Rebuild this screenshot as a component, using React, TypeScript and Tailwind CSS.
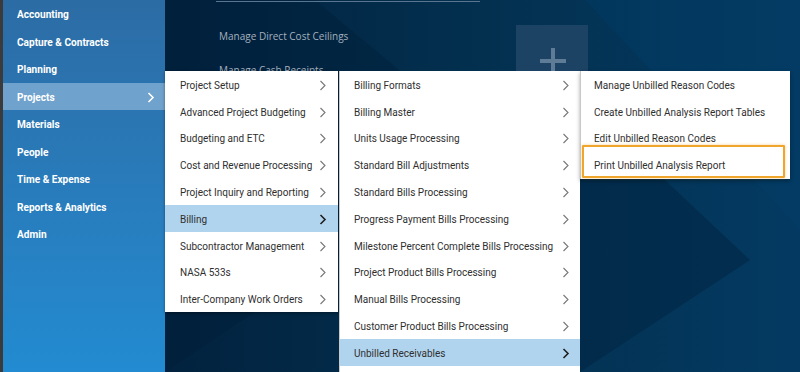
import React from 'react';

const sideItems = [
  'Accounting',
  'Capture & Contracts',
  'Planning',
  'Projects',
  'Materials',
  'People',
  'Time & Expense',
  'Reports & Analytics',
  'Admin',
];

const projectItems = [
  'Project Setup',
  'Advanced Project Budgeting',
  'Budgeting and ETC',
  'Cost and Revenue Processing',
  'Project Inquiry and Reporting',
  'Billing',
  'Subcontractor Management',
  'NASA 533s',
  'Inter-Company Work Orders',
];

const billingItems = [
  'Billing Formats',
  'Billing Master',
  'Units Usage Processing',
  'Standard Bill Adjustments',
  'Standard Bills Processing',
  'Progress Payment Bills Processing',
  'Milestone Percent Complete Bills Processing',
  'Project Product Bills Processing',
  'Manual Bills Processing',
  'Customer Product Bills Processing',
  'Unbilled Receivables',
];

const unbilledItems = [
  'Manage Unbilled Reason Codes',
  'Create Unbilled Analysis Report Tables',
  'Edit Unbilled Reason Codes',
  'Print Unbilled Analysis Report',
];

const Chevron: React.FC<{ dark?: boolean; white?: boolean }> = ({ dark, white }) => (
  <svg width="8" height="11" viewBox="0 0 8 11" className="shrink-0">
    <path
      d="M1.5 1 L6 5.5 L1.5 10"
      fill="none"
      stroke={white ? '#ffffff' : dark ? '#1f1f1f' : '#777777'}
      strokeWidth={dark || white ? 1.6 : 1.1}
    />
  </svg>
);

const MenuRow: React.FC<{ label: string; active?: boolean; chevron?: boolean; px: string }> = ({
  label,
  active,
  chevron = true,
  px,
}) => (
  <div
    className={`flex items-center justify-between h-[26.8px] pt-[2px] ${px} ${
      active ? 'bg-[#b1d4ee]' : 'bg-white'
    }`}
  >
    <span className="text-[10px] text-[#2f2f2f] whitespace-nowrap">{label}</span>
    {chevron && <Chevron dark={active} />}
  </div>
);

export default function App() {
  return (
    <div
      className="relative w-[800px] h-[372px] overflow-hidden flex bg-[#032c4e]"
      style={{ fontFamily: 'Roboto, "Noto Sans", Arial, sans-serif' }}
    >
      {/* dark left edge */}
      <div className="w-[3px] bg-[#3b3b3b]" />

      {/* Sidebar */}
      <div className="w-[162px] h-full bg-gradient-to-b from-[#2c6ca5] to-[#228bd1] flex flex-col">
        {sideItems.map(item => (
          <div
            key={item}
            className={`flex items-center justify-between h-[27.5px] pt-[2px] pl-[14px] pr-[10px] ${
              item === 'Projects' ? 'bg-[#6fa2cc]' : ''
            }`}
          >
            <span className="text-[10.1px] font-bold text-white">{item}</span>
            {item === 'Projects' && <Chevron white />}
          </div>
        ))}
      </div>

      {/* Background workspace */}
      <div className="relative flex-1 h-full bg-gradient-to-r from-[#02223f] via-[#03304f] to-[#043a62]">
        <svg className="absolute inset-0" width="635" height="372">
          <polygon points="180,0 420,0 635,230 635,0" fill="#044069" opacity="0.35" />
          <polygon points="0,0 150,0 330,150 0,372" fill="#011d36" opacity="0.35" />
          <polygon points="415,100 585,260 415,372" fill="#022644" opacity="0.6" />
        </svg>
        <div className="absolute left-[51px] top-[1px] w-[264px] h-px bg-[#5a7590]" />
        <div
          className="absolute left-[54px] top-[29px] text-[10px] text-[#a4b1bf]"
          style={{ fontFamily: '"Open Sans", sans-serif' }}
        >
          Manage Direct Cost Ceilings
        </div>
        <div
          className="absolute left-[54px] top-[63px] text-[10px] text-[#a4b1bf]"
          style={{ fontFamily: '"Open Sans", sans-serif' }}
        >
          Manage Cash Receipts
        </div>
        <div className="absolute left-[351px] top-[25px] w-[72px] h-[60px] bg-[#1c4264]">
          <div className="absolute left-[35px] top-[23px] w-[4px] h-[30px] bg-[#5f7c97]" />
          <div className="absolute left-[24px] top-[34px] w-[26px] h-[4px] bg-[#5f7c97]" />
        </div>
      </div>

      {/* Projects flyout */}
      <div className="absolute left-[165px] top-[71px] w-[173px] bg-white shadow-[0_1px_3px_rgba(0,0,0,0.4)] flex flex-col">
        {projectItems.map(item => (
          <MenuRow key={item} label={item} active={item === 'Billing'} px="pl-[15px] pr-[11px]" />
        ))}
      </div>

      {/* Billing flyout */}
      <div className="absolute left-[339px] top-[71px] w-[241px] h-[310px] bg-white border-l border-[#c8c8c8] flex flex-col">
        {billingItems.map(item => (
          <MenuRow
            key={item}
            label={item}
            active={item === 'Unbilled Receivables'}
            px="pl-[14px] pr-[10px]"
          />
        ))}
      </div>

      {/* Unbilled flyout */}
      <div className="absolute left-[580px] top-[71px] w-[210px] h-[108px] bg-white border-l border-[#c8c8c8] shadow-[0_2px_4px_rgba(0,0,0,0.35)] flex flex-col">
        {unbilledItems.map(item => (
          <MenuRow key={item} label={item} chevron={false} px="pl-[13px] pr-[10px]" />
        ))}
        <div className="absolute left-[1px] top-[74px] w-[203px] h-[33px] border-2 border-[#f0a62c] rounded-[1px] shadow-[0_0_3px_rgba(240,166,44,0.5)]" />
      </div>
    </div>
  );
}
